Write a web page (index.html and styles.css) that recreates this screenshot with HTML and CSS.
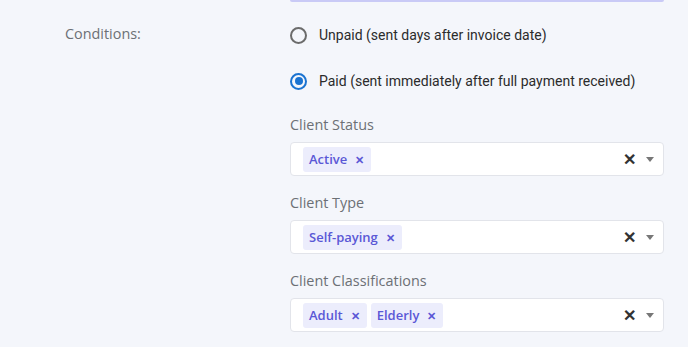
FILE: index.html
```html
<!DOCTYPE html>
<html lang="en">
<head>
    <meta charset="UTF-8">
    <meta name="viewport" content="width=device-width, initial-scale=1.0">
    <title>Reminder Conditions</title>
    <link rel="stylesheet" href="styles.css">
</head>
<body>
    <div class="form-row">
        <div class="row-label"></div>
        <div class="row-field">
            <div class="prev-input"></div>
        </div>
    </div>

    <div class="form-row conditions">
        <div class="row-label">Conditions:</div>
        <div class="row-field">
            <label class="radio">
                <span class="radio-dot"></span>
                Unpaid (sent days after invoice date)
            </label>
            <label class="radio checked">
                <span class="radio-dot"></span>
                Paid (sent immediately after full payment received)
            </label>

            <div class="field">
                <div class="field-label">Client Status</div>
                <div class="select">
                    <div class="chips">
                        <span class="chip">Active <span class="chip-x">&#x2715;</span></span>
                    </div>
                    <span class="clear">&#x2715;</span>
                    <span class="caret"></span>
                </div>
            </div>

            <div class="field">
                <div class="field-label">Client Type</div>
                <div class="select">
                    <div class="chips">
                        <span class="chip">Self-paying <span class="chip-x">&#x2715;</span></span>
                    </div>
                    <span class="clear">&#x2715;</span>
                    <span class="caret"></span>
                </div>
            </div>

            <div class="field">
                <div class="field-label">Client Classifications</div>
                <div class="select">
                    <div class="chips">
                        <span class="chip">Adult <span class="chip-x">&#x2715;</span></span>
                        <span class="chip">Elderly <span class="chip-x">&#x2715;</span></span>
                    </div>
                    <span class="clear">&#x2715;</span>
                    <span class="caret"></span>
                </div>
            </div>
        </div>
    </div>
</body>
</html>
```

FILE: styles.css
```css
body {
    margin: 0;
    padding: 0;
    background-color: #f4f6fb;
    font-family: 'Open Sans', sans-serif;
    color: #333;
}
.form-row {
    display: flex;
}
.row-label {
    width: 290px;
    flex-shrink: 0;
    padding-left: 65px;
    box-sizing: border-box;
    font-size: 14.4px;
    font-weight: 500;
    color: #6c7075;
}
.row-field {
    width: 374px;
}
.prev-input {
    height: 2px;
    background-color: #c9caf6;
    border-radius: 0 0 4px 4px;
}
.conditions {
    padding-top: 21px;
}
.conditions .row-label {
    line-height: 20px;
    padding-top: 1px;
}
.radio {
    display: flex;
    align-items: center;
    height: 24px;
    margin-bottom: 22px;
    font-family: Roboto, sans-serif;
    font-size: 14px;
    color: #2b2b2b;
}
.radio-dot {
    width: 13px;
    height: 13px;
    border: 2px solid #6b6b6b;
    border-radius: 50%;
    margin-right: 12px;
    position: relative;
}
.radio.checked .radio-dot {
    border-color: #1a73d1;
}
.radio.checked .radio-dot::after {
    content: '';
    position: absolute;
    left: 2.5px;
    top: 2.5px;
    width: 8px;
    height: 8px;
    border-radius: 50%;
    background-color: #1a73d1;
}
.field {
    margin-bottom: 17px;
}
.field-label {
    font-size: 14.4px;
    font-weight: 500;
    line-height: 20px;
    color: #6c7075;
    margin-bottom: 7px;
}
.select {
    display: flex;
    align-items: center;
    height: 34px;
    box-sizing: border-box;
    background-color: #fff;
    border: 1px solid #e2e4ea;
    border-radius: 4px;
    padding: 0 9px 0 12px;
}
.chips {
    flex-grow: 1;
    display: flex;
    gap: 4px;
}
.chip {
    display: flex;
    align-items: center;
    height: 25px;
    padding: 0 7px 0 6px;
    background-color: #ecedfc;
    color: #5a58d6;
    border-radius: 3px;
    font-size: 13px;
    font-weight: 600;
}
.chip-x {
    font-size: 11px;
    font-weight: 700;
    margin-left: 8px;
}
.clear {
    font-size: 16px;
    font-weight: 700;
    color: #333;
    margin-right: 10px;
}
.caret {
    width: 0;
    height: 0;
    border-left: 4.5px solid transparent;
    border-right: 4.5px solid transparent;
    border-top: 5px solid #777;
}
```
